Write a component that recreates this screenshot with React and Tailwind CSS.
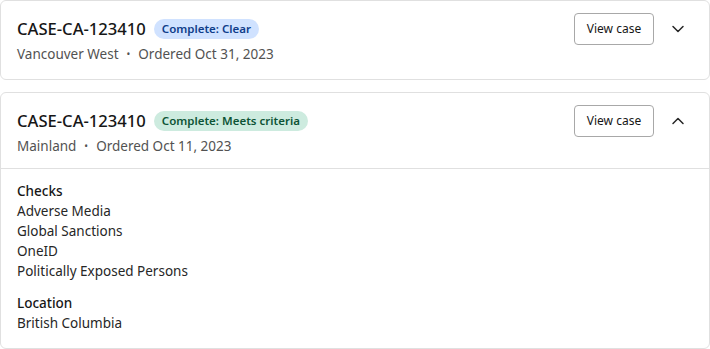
import React from "react";

function Chevron({ up }) {
  return (
    <svg width="16" height="16" viewBox="0 0 16 16" fill="none" className="text-[#262626]">
      <path d={up ? "M3 10.5l5-5 5 5" : "M3 5.5l5 5 5-5"} stroke="currentColor" strokeWidth="1.5" strokeLinecap="round" strokeLinejoin="round" />
    </svg>
  );
}

function Header({ title, badge, badgeClass, location, date, up }) {
  return (
    <div className="flex items-start justify-between pl-4 pr-[23px] pt-3 pb-3">
      <div className="flex flex-col">
        <div className="flex items-center gap-2 h-8">
          <span className="text-[16.6px] font-medium text-[#161616]">{title}</span>
          <span className={"h-5 px-2 rounded-full text-[11.5px] font-semibold leading-5 " + badgeClass}>{badge}</span>
        </div>
        <div className="flex items-center text-[13.5px] text-[#525252] mt-[-1px] leading-5">
          <span>{location}</span>
          <span className="mx-2 text-[10px]">•</span>
          <span>{date}</span>
        </div>
      </div>
      <div className="flex items-center gap-4">
        <button className="h-8 w-20 border border-[#a8a8a8] rounded-[4px] text-[12px] text-[#161616] bg-white">View case</button>
        <Chevron up={up} />
      </div>
    </div>
  );
}

export default function App() {
  return (
    <div className="w-[710px] h-[349px] bg-white flex flex-col gap-3" style={{ fontFamily: '"Noto Sans", sans-serif' }}>
      <div className="border border-[#e0e0e0] rounded-[6px] h-[80px]">
        <Header title="CASE-CA-123410" badge="Complete: Clear" badgeClass="bg-[#d0e2ff] text-[#0f3d8a]" location="Vancouver West" date="Ordered Oct 31, 2023" />
      </div>
      <div className="border border-[#e0e0e0] rounded-[6px] flex-1 flex flex-col">
        <Header title="CASE-CA-123410" badge="Complete: Meets criteria" badgeClass="bg-[#cdebdf] text-[#0e5436]" location="Mainland" date="Ordered Oct 11, 2023" up />
        <div className="border-t border-[#e0e0e0] px-4 pt-3 text-[13.5px] leading-5 text-[#262626]">
          <div className="font-medium text-[#161616]">Checks</div>
          <div>Adverse Media</div>
          <div>Global Sanctions</div>
          <div>OneID</div>
          <div>Politically Exposed Persons</div>
          <div className="font-medium text-[#161616] mt-3">Location</div>
          <div>British Columbia</div>
        </div>
      </div>
    </div>
  );
}
